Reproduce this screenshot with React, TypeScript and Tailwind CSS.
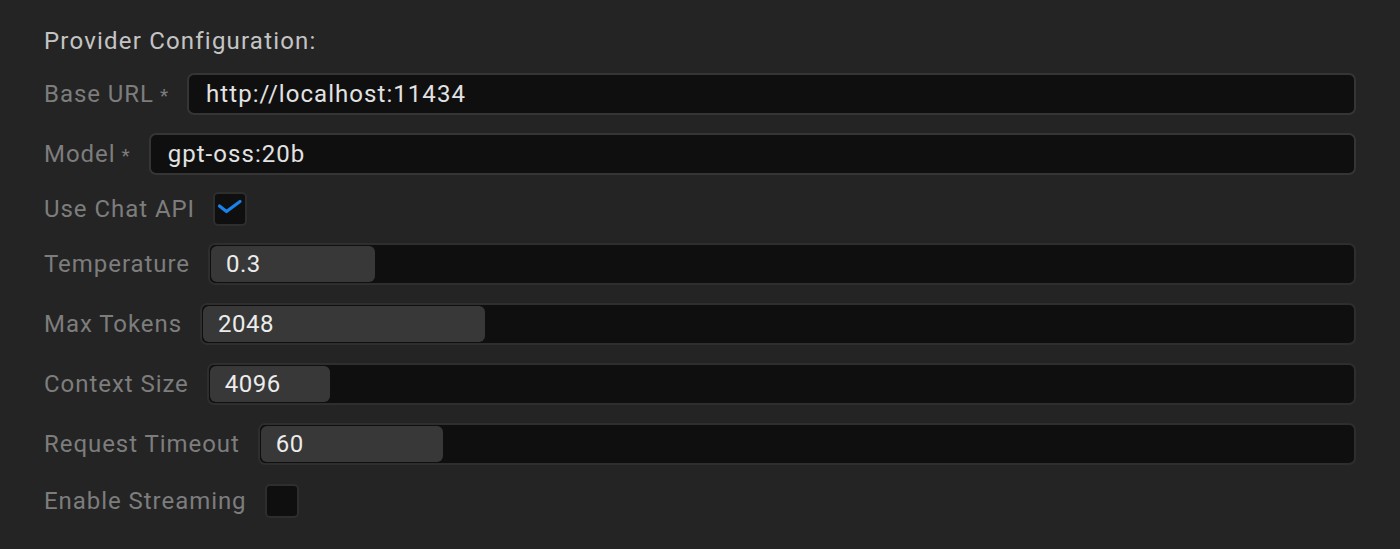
import React from "react";

const font = { fontFamily: "Roboto, 'Noto Sans', sans-serif" };

function Label({ text, req }: { text: string; req?: boolean }) {
  return (
    <span className="text-[24px] leading-none tracking-[0.95px] text-[#7d7d7d] whitespace-nowrap flex items-center">
      {text}
      {req && <span className="ml-[6px] text-[19px] text-[#7d7d7d] relative top-[1px]">*</span>}
    </span>
  );
}

function TextRow({ label, value, req }: { label: string; value: string; req?: boolean }) {
  return (
    <div className="flex items-center gap-[18px] py-[9px]">
      <Label text={label} req={req} />
      <div className="flex-1 h-[42px] rounded-[7px] border-2 border-[#353535] bg-[#0f0f0f] flex items-center pl-[17px] text-[24px] tracking-[1.05px] text-[#e2e2e2]">
        {value}
      </div>
    </div>
  );
}

function SliderRow({ label, value, fill }: { label: string; value: string; fill: number }) {
  return (
    <div className="flex items-center gap-[18px] py-[9px]">
      <Label text={label} />
      <div className="flex-1 h-[42px] rounded-[7px] border-2 border-[#2e2e2e] bg-[#0f0f0f] p-[1px] flex">
        <div
          className="h-full rounded-[6px] bg-[#383838] flex items-center pl-[15px] text-[24px] tracking-[0.5px] text-[#ececec]"
          style={{ width: fill }}
        >
          {value}
        </div>
      </div>
    </div>
  );
}

function CheckRow({ label, checked, top }: { label: string; checked?: boolean; top: string }) {
  return (
    <div className={`flex items-center gap-[18px] pb-[8px] ${top}`}>
      <Label text={label} />
      <div className="w-[34px] h-[34px] rounded-[5px] border-2 border-[#2e2e2e] bg-[#0f0f0f] flex items-center justify-center">
        {checked && (
          <svg width="34" height="34" viewBox="0 0 34 34" fill="none" className="shrink-0">
            <path d="M6.5 14 L13.5 19.5 L27 9.5" stroke="#1a82ec" strokeWidth="3.2" strokeLinecap="round" strokeLinejoin="round" />
          </svg>
        )}
      </div>
    </div>
  );
}

export default function App() {
  return (
    <div className="w-[1400px] h-[549px] bg-[#242424] overflow-hidden" style={font}>
      <div className="pl-[44px] pr-[44px] pt-[29px]">
        <div className="text-[24px] leading-none tracking-[1.2px] text-[#c4c4c4] pb-[11px]">Provider Configuration:</div>
        <TextRow label="Base URL" value="http://localhost:11434" req />
        <TextRow label="Model" value="gpt-oss:20b" req />
        <CheckRow label="Use Chat API" checked top="pt-[8px]" />
        <SliderRow label="Temperature" value="0.3" fill={164} />
        <SliderRow label="Max Tokens" value="2048" fill={282} />
        <SliderRow label="Context Size" value="4096" fill={120} />
        <SliderRow label="Request Timeout" value="60" fill={182} />
        <CheckRow label="Enable Streaming" top="pt-[10px]" />
      </div>
    </div>
  );
}
